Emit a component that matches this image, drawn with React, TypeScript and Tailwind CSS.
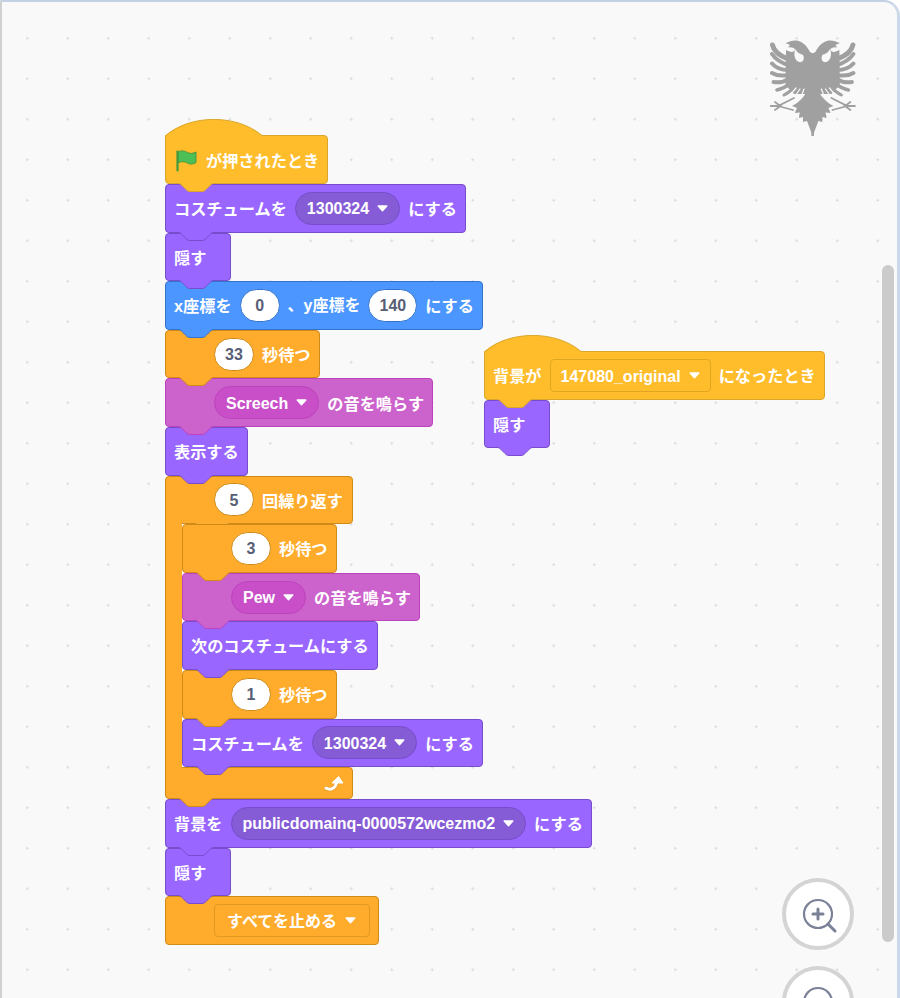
import React from 'react';

type Tone = { bg: string; border: string; fill: string; stroke: string };

const MOTION: Tone = { bg: 'bg-[#4c97ff]', border: 'border-[#3373cc]', fill: '#4c97ff', stroke: '#3373cc' };
const LOOKS: Tone = { bg: 'bg-[#9966ff]', border: 'border-[#774dcb]', fill: '#9966ff', stroke: '#774dcb' };
const SOUND: Tone = { bg: 'bg-[#cc62cc]', border: 'border-[#bd42bd]', fill: '#cc62cc', stroke: '#bd42bd' };
const CONTROL: Tone = { bg: 'bg-[#ffab2c]', border: 'border-[#cf8b17]', fill: '#ffab2c', stroke: '#cf8b17' };
const EVENT: Tone = { bg: 'bg-[#ffbd2b]', border: 'border-[#d9a62b]', fill: '#ffbd2b', stroke: '#d9a62b' };

const NOTCH = 'c2,0 3,1 4,2 l4,4 c1,1 2,2 4,2 h12 c2,0 3,-1 4,-2 l4,-4 c1,-1 2,-2 4,-2';

const Bump: React.FC<{ tone: Tone; className: string }> = ({ tone, className }) => (
    <svg width="36" height="10" viewBox="0 0 36 10" className={`absolute overflow-visible ${className}`}>
        <path d={`M0,0.5 ${NOTCH} V0 H0 z`} fill={tone.fill} />
        <path d={`M0,0.5 ${NOTCH}`} fill="none" stroke={tone.stroke} strokeWidth="1" />
    </svg>
);

const Caret = () => (
    <svg width="11" height="7" viewBox="0 0 11 7" className="-mt-[2px] shrink-0">
        <path d="M1.2,1 H9.8 L5.5,5.8 z" fill="#fff" stroke="#fff" strokeWidth="1.4" strokeLinejoin="round" />
    </svg>
);

const Num: React.FC<{ value: string; tone: Tone }> = ({ value, tone }) => (
    <span className={`-mt-[2px] flex h-[33px] min-w-10 items-center justify-center rounded-full border bg-white px-[10px] pt-[2px] text-base text-[#575e75] ${tone.border}`}>
        {value}
    </span>
);

const Menu: React.FC<{ label: string; className: string }> = ({ label, className }) => (
    <span className={`-mt-[2px] flex h-[33px] items-center gap-2 border pt-[2px] text-base ${className}`}>
        {label}
        <Caret />
    </span>
);

const Block: React.FC<{ tone: Tone; size?: string; className?: string; children?: React.ReactNode; noBump?: boolean }> = ({
    tone,
    size = 'h-[48.6px] w-fit min-w-[66px]',
    className = '',
    children,
    noBump,
}) => (
    <div className={`relative flex items-center gap-2 rounded border px-2 pt-[2px] ${size} ${tone.bg} ${tone.border} ${className}`}>
        {children}
        {!noBump && <Bump tone={tone} className="left-[12px] top-full" />}
    </div>
);

const Hat: React.FC<{ children: React.ReactNode }> = ({ children }) => (
    <div className="relative">
        <svg width="98" height="19" viewBox="0 0 98 19" className="absolute -top-[17px] left-0 z-10 overflow-visible">
            <path d="M0,18.5 V17.5 C25,-4 72,-4 97,17.5 V18.5 z" fill={EVENT.fill} />
            <path d="M0.5,18 C25,-4 72,-4 97,17.5" fill="none" stroke={EVENT.stroke} />
        </svg>
        <Block tone={EVENT} className="rounded-tl-none">{children}</Block>
    </div>
);

// earlier blocks sit on top so their bump covers the next block's top edge
const Stack: React.FC<{ children: React.ReactNode }> = ({ children }) => {
    const items = React.Children.toArray(children);
    return (
        <div className="flex flex-col items-start">
            {items.map((item, i) => (
                <div key={i} className="relative" style={{ zIndex: items.length - i }}>
                    {item}
                </div>
            ))}
        </div>
    );
};

const LoopArrow = () => (
    <svg width="20" height="18" viewBox="0 0 20 18" className="-mt-[2px]">
        <path d="M2,14 C6,16.5 11,15 12.5,9" fill="none" stroke="#cf8b17" strokeWidth="4" strokeLinecap="round" opacity="0.6" />
        <path d="M2,14 C6,16.5 11,15 12.5,9" fill="none" stroke="#fff" strokeWidth="3" strokeLinecap="round" />
        <path d="M8,9 L14.5,2.5 L19,9 z" fill="#fff" stroke="#fff" strokeWidth="1" strokeLinejoin="round" />
    </svg>
);

const RepeatBlock: React.FC<{ times: string; children: React.ReactNode }> = ({ times, children }) => (
    <div className="flex flex-col items-start">
        <Block tone={CONTROL} noBump size="h-[48.6px] w-[188px]" className="rounded-bl-none pl-[48px]">
            <Num value={times} tone={CONTROL} />
            <span>回繰り返す</span>
        </Block>
        <div className="relative z-10 flex">
            <div className="relative w-[17px] shrink-0">
                <div className="absolute inset-x-0 -inset-y-px border-l border-[#cf8b17] bg-[#ffab2c]" />
            </div>
            <Stack>{children}</Stack>
            <Bump tone={CONTROL} className="left-[29px] -top-px" />
        </div>
        <Block tone={CONTROL} size="h-8 w-[188px]" className="justify-end rounded-tl-none">
            <LoopArrow />
        </Block>
    </div>
);

const Flag = () => (
    <svg width="23" height="23" viewBox="0 0 23 23" className="ml-px shrink-0">
        <path d="M3,3 C6,1 10,2 12.5,3.5 C15,5 18,4.5 21,3 V13.5 C18,15.5 15,15.5 12.5,14 C10,12.5 6,12 3,14 z" fill="#4cbf56" stroke="#45993d" strokeWidth="1" strokeLinejoin="round" />
        <path d="M2.5,2.5 V21.5" stroke="#45993d" strokeWidth="2.2" strokeLinecap="round" />
    </svg>
);

const LOOKS_PILL = 'rounded-full px-[11px] bg-[#855cd6] border-[#774dcb]';
const SOUND_PILL = 'rounded-full px-[11px] bg-[#c94fc9] border-[#bd42bd]';

const EagleHalf = () => (
    <g fill="none" stroke="#a0a0a0" strokeLinecap="round">
        <path
            fill="#a0a0a0"
            stroke="none"
            d="M44,14 L40,12 C37,6 33,2 27,0.5 C23,0 19,1.5 15.5,3 L20,5 L18,7.5 C22,7 25,8 25,10 C23,13 20,12 16,10 L15.5,45 L24,54 H44 z"
        />
        <path d="M25.5,9 C23,14 25,21 29,22 C33,23 35,19 33,15 C31,14 27,13 25.5,9 z" fill="#f9f9f9" stroke="none" />
        <path strokeWidth="5" d="M2.5,5 C4,12 10,16 18,19" />
        <path strokeWidth="4" d="M2,14 C6,20 12,23 18,25" />
        <path strokeWidth="4" d="M2,23.5 C6,28 12,30 18,30" />
        <path strokeWidth="4" d="M2,33 C7,36 13,36 18,35" />
        <path strokeWidth="4" d="M3.5,42 C9,43 14,42 19,39" />
        <path strokeWidth="3.6" d="M7,50 C12,49 17,46 21,43" />
        <path strokeWidth="3" d="M14,55 C18,53 22,50 25,46" />
        <path strokeWidth="1.2" stroke="#f9f9f9" d="M26,48 L21,54 M30,49 L25,56 M34,49 L31,57" />
        <path strokeWidth="1.8" d="M0.5,66 H8 L24,58 M8,66 L23,70 M5,62 L11,66.5 M5,70 L11,65.5" />
        <path
            fill="#a0a0a0"
            stroke="none"
            d="M36,53 C33,58 28,63 22,66 L27,68 C26,70 25,72 25,73 L30,72.5 C29,75 29,77 29,78 L33,77 L33,82 L37,81 L42.7,96 H44 V53 z"
        />
    </g>
);

const Eagle = () => (
    <svg width="86" height="97" viewBox="0 0 86 97" className="absolute left-[769.5px] top-[39.5px]">
        <EagleHalf />
        <g transform="translate(85.4 0) scale(-1 1)">
            <EagleHalf />
        </g>
    </svg>
);

const ZoomButton: React.FC<{ className: string; plus?: boolean }> = ({ className, plus }) => (
    <div className={`absolute left-[782px] flex size-[72px] items-center justify-center rounded-full border-4 border-[#d4d4d4] bg-white ${className}`}>
        <svg width="40" height="40" viewBox="0 0 40 40" fill="none" stroke="#7b8197" strokeLinecap="round">
            <circle cx="20" cy="20" r="14" strokeWidth="2.2" />
            <path d="M30,30 L37,37" strokeWidth="3" />
            <path d={plus ? 'M15,20 H25 M20,15 V25' : 'M15,20 H25'} strokeWidth="3" />
        </svg>
    </div>
);

export default function App() {
    return (
        <div className="relative h-[998px] w-[900px] overflow-hidden bg-white [font-family:'Liberation_Sans','Noto_Sans_CJK_JP',sans-serif]">
            <div className="absolute inset-0 rounded-tr-2xl border-l-2 border-r-[3px] border-t-2 border-b-0 border-l-[#d0d0d0] border-r-[#cbd9ea] border-t-[#c2d1e3] bg-[#f9f9f9] bg-[radial-gradient(circle,#dcdcdc_1px,transparent_1.4px)] bg-[size:40.5px_40.5px] bg-[position:5px_16px]" />

            <Eagle />

            <div className="absolute left-[165px] top-[135.4px] text-[16.2px] font-bold text-white">
                <Stack>
                    <Hat>
                        <Flag />
                        <span>が押されたとき</span>
                    </Hat>
                    <Block tone={LOOKS}>
                        <span>コスチュームを</span>
                        <Menu label="1300324" className={LOOKS_PILL} />
                        <span>にする</span>
                    </Block>
                    <Block tone={LOOKS}>隠す</Block>
                    <Block tone={MOTION}>
                        <span>x座標を</span>
                        <Num value="0" tone={MOTION} />
                        <span className="text-base">、y座標を</span>
                        <Num value="140" tone={MOTION} />
                        <span>にする</span>
                    </Block>
                    <Block tone={CONTROL} className="pl-[48px]">
                        <Num value="33" tone={CONTROL} />
                        <span>秒待つ</span>
                    </Block>
                    <Block tone={SOUND} className="pl-[48px]">
                        <Menu label="Screech" className={SOUND_PILL} />
                        <span>の音を鳴らす</span>
                    </Block>
                    <Block tone={LOOKS}>表示する</Block>
                    <RepeatBlock times="5">
                        <Block tone={CONTROL} className="pl-[48px]">
                            <Num value="3" tone={CONTROL} />
                            <span>秒待つ</span>
                        </Block>
                        <Block tone={SOUND} className="pl-[48px]">
                            <Menu label="Pew" className={SOUND_PILL} />
                            <span>の音を鳴らす</span>
                        </Block>
                        <Block tone={LOOKS}>次のコスチュームにする</Block>
                        <Block tone={CONTROL} className="pl-[48px]">
                            <Num value="1" tone={CONTROL} />
                            <span>秒待つ</span>
                        </Block>
                        <Block tone={LOOKS}>
                            <span>コスチュームを</span>
                            <Menu label="1300324" className={LOOKS_PILL} />
                            <span>にする</span>
                        </Block>
                    </RepeatBlock>
                    <Block tone={LOOKS}>
                        <span>背景を</span>
                        <Menu label="publicdomainq-0000572wcezmo2" className={LOOKS_PILL} />
                        <span>にする</span>
                    </Block>
                    <Block tone={LOOKS}>隠す</Block>
                    <Block tone={CONTROL} noBump className="pl-[48px]">
                        <Menu label="すべてを止める" className="rounded pl-3 pr-[13px] bg-[#ffab2c] border-[#e09a22]" />
                    </Block>
                </Stack>
            </div>

            <div className="absolute left-[484px] top-[351.3px] text-[16.2px] font-bold text-white">
                <Stack>
                    <Hat>
                        <span>背景が</span>
                        <Menu label="147080_original" className="rounded px-[10px] bg-[#ffbd2b] border-[#e0a622]" />
                        <span>になったとき</span>
                    </Hat>
                    <Block tone={LOOKS}>隠す</Block>
                </Stack>
            </div>

            <div className="absolute left-[882px] top-[265px] h-[677px] w-3 rounded-full bg-[#cbcbcb]" />

            <ZoomButton plus className="top-[878px]" />
            <ZoomButton className="top-[966px]" />
        </div>
    );
}
